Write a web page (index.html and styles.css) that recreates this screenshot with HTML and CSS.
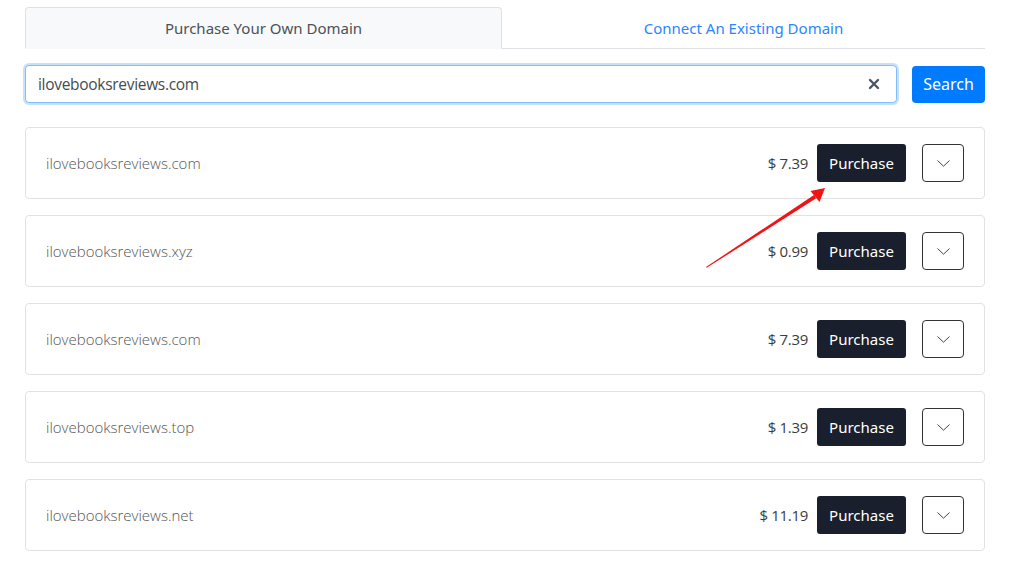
FILE: index.html
```html
<!DOCTYPE html>
<html lang="en">
<head>
    <meta charset="UTF-8">
    <title>Domain Search</title>
    <link rel="stylesheet" href="styles.css">
</head>
<body>
<div class="container">
    <div class="tabs">
        <div class="tab active">Purchase Your Own Domain</div>
        <div class="tab">Connect An Existing Domain</div>
    </div>

    <div class="search-row">
        <div class="search-box">
            <input class="search-input" type="text" value="ilovebooksreviews.com">
            <span class="clear-icon">
                <svg width="12" height="12" viewBox="0 0 12 12"><path d="M2 2 L10 10 M10 2 L2 10" stroke="#4a5568" stroke-width="2.4" stroke-linecap="round"/></svg>
            </span>
        </div>
        <button class="search-button">Search</button>
    </div>

    <div class="results">
        <div class="result-row">
            <span class="domain-name">ilovebooksreviews.com</span>
            <span class="price">$ 7.39</span>
            <button class="purchase-button">Purchase</button>
            <button class="more-button"><svg width="13" height="7" viewBox="0 0 13 7"><path d="M0.5 0.5 L6.5 6.2 L12.5 0.5" fill="none" stroke="#444" stroke-width="1"/></svg></button>
        </div>
        <div class="result-row">
            <span class="domain-name">ilovebooksreviews.xyz</span>
            <span class="price">$ 0.99</span>
            <button class="purchase-button">Purchase</button>
            <button class="more-button"><svg width="13" height="7" viewBox="0 0 13 7"><path d="M0.5 0.5 L6.5 6.2 L12.5 0.5" fill="none" stroke="#444" stroke-width="1"/></svg></button>
        </div>
        <div class="result-row">
            <span class="domain-name">ilovebooksreviews.com</span>
            <span class="price">$ 7.39</span>
            <button class="purchase-button">Purchase</button>
            <button class="more-button"><svg width="13" height="7" viewBox="0 0 13 7"><path d="M0.5 0.5 L6.5 6.2 L12.5 0.5" fill="none" stroke="#444" stroke-width="1"/></svg></button>
        </div>
        <div class="result-row">
            <span class="domain-name">ilovebooksreviews.top</span>
            <span class="price">$ 1.39</span>
            <button class="purchase-button">Purchase</button>
            <button class="more-button"><svg width="13" height="7" viewBox="0 0 13 7"><path d="M0.5 0.5 L6.5 6.2 L12.5 0.5" fill="none" stroke="#444" stroke-width="1"/></svg></button>
        </div>
        <div class="result-row">
            <span class="domain-name">ilovebooksreviews.net</span>
            <span class="price">$ 11.19</span>
            <button class="purchase-button">Purchase</button>
            <button class="more-button"><svg width="13" height="7" viewBox="0 0 13 7"><path d="M0.5 0.5 L6.5 6.2 L12.5 0.5" fill="none" stroke="#444" stroke-width="1"/></svg></button>
        </div>
    </div>
</div>

<!-- annotation arrow drawn over the page -->
<svg class="annotation" width="1014" height="561" viewBox="0 0 1014 561">
    <polygon points="706,267 706.7,267.8 816.2,198.3 814,195" fill="#f01414"/>
    <polygon points="825,188 819.5,202 810.5,191" fill="#f01414"/>
</svg>
</body>
</html>
```
FILE: styles.css
```css
body {
    margin: 0;
    font-family: "Noto Sans", "Open Sans", sans-serif;
    font-size: 15px;
    color: #333;
    background: #fff;
}

.container {
    width: 960px;
    margin-left: 25px;
    padding-top: 7px;
}

/* tabs */
.tabs {
    display: flex;
    border-bottom: 1px solid #dee2e6;
}

.tab {
    flex: 1;
    height: 40px;
    display: flex;
    align-items: center;
    justify-content: center;
    color: #2a85ff;
    margin-bottom: -1px;
    border: 1px solid transparent;
    border-radius: 4px 4px 0 0;
}

.tab.active {
    flex: 0 0 477px;
    box-sizing: border-box;
    height: 42px;
    color: #4b5259;
    background: #f8f9fa;
    border-color: #dee2e6 #dee2e6 #f8f9fa;
}

/* search */
.search-row {
    display: flex;
    align-items: center;
    margin-top: 16px;
}

.search-box {
    position: relative;
    flex: 1;
}

.search-input {
    box-sizing: border-box;
    width: 872px;
    height: 38px;
    padding: 0 12px;
    font-family: "Open Sans", sans-serif;
    font-size: 15.5px;
    letter-spacing: -0.3px;
    color: #444b52;
    border: 1px solid #80bdff;
    border-radius: 4px;
    box-shadow: 0 0 0 2px rgba(0, 123, 255, .22);
    outline: none;
}

.clear-icon {
    position: absolute;
    right: 17px;
    top: 13px;
    line-height: 0;
}

.search-button {
    height: 37px;
    width: 73px;
    margin-left: 15px;
    background: #007bff;
    color: #fff;
    border: none;
    border-radius: 4px;
    font-family: inherit;
    font-size: 16px;
}

/* results */
.results {
    display: flex;
    flex-direction: column;
    gap: 16px;
    margin-top: 24px;
}

.result-row {
    display: flex;
    align-items: center;
    height: 70px;
    padding: 0 20px;
    border: 1px solid #e2e2e2;
    border-radius: 4px;
}

.domain-name {
    flex: 1;
    font-family: "Open Sans", sans-serif;
    font-weight: 300;
    color: #555;
}

.price {
    font-family: "Open Sans", sans-serif;
    letter-spacing: -0.3px;
    color: #3c3c3c;
    margin-right: 9px;
}

.purchase-button {
    height: 38px;
    width: 89px;
    background: #1a1f2e;
    color: #fff;
    border: none;
    border-radius: 3px;
    font-family: inherit;
    font-size: 15px;
}

.more-button {
    width: 42px;
    height: 38px;
    margin-left: 16px;
    background: #fff;
    border: 1px solid #333;
    border-radius: 4px;
    display: flex;
    align-items: center;
    justify-content: center;
    padding: 0;
}

.annotation {
    position: absolute;
    left: 0;
    top: 0;
    pointer-events: none;
}
```
